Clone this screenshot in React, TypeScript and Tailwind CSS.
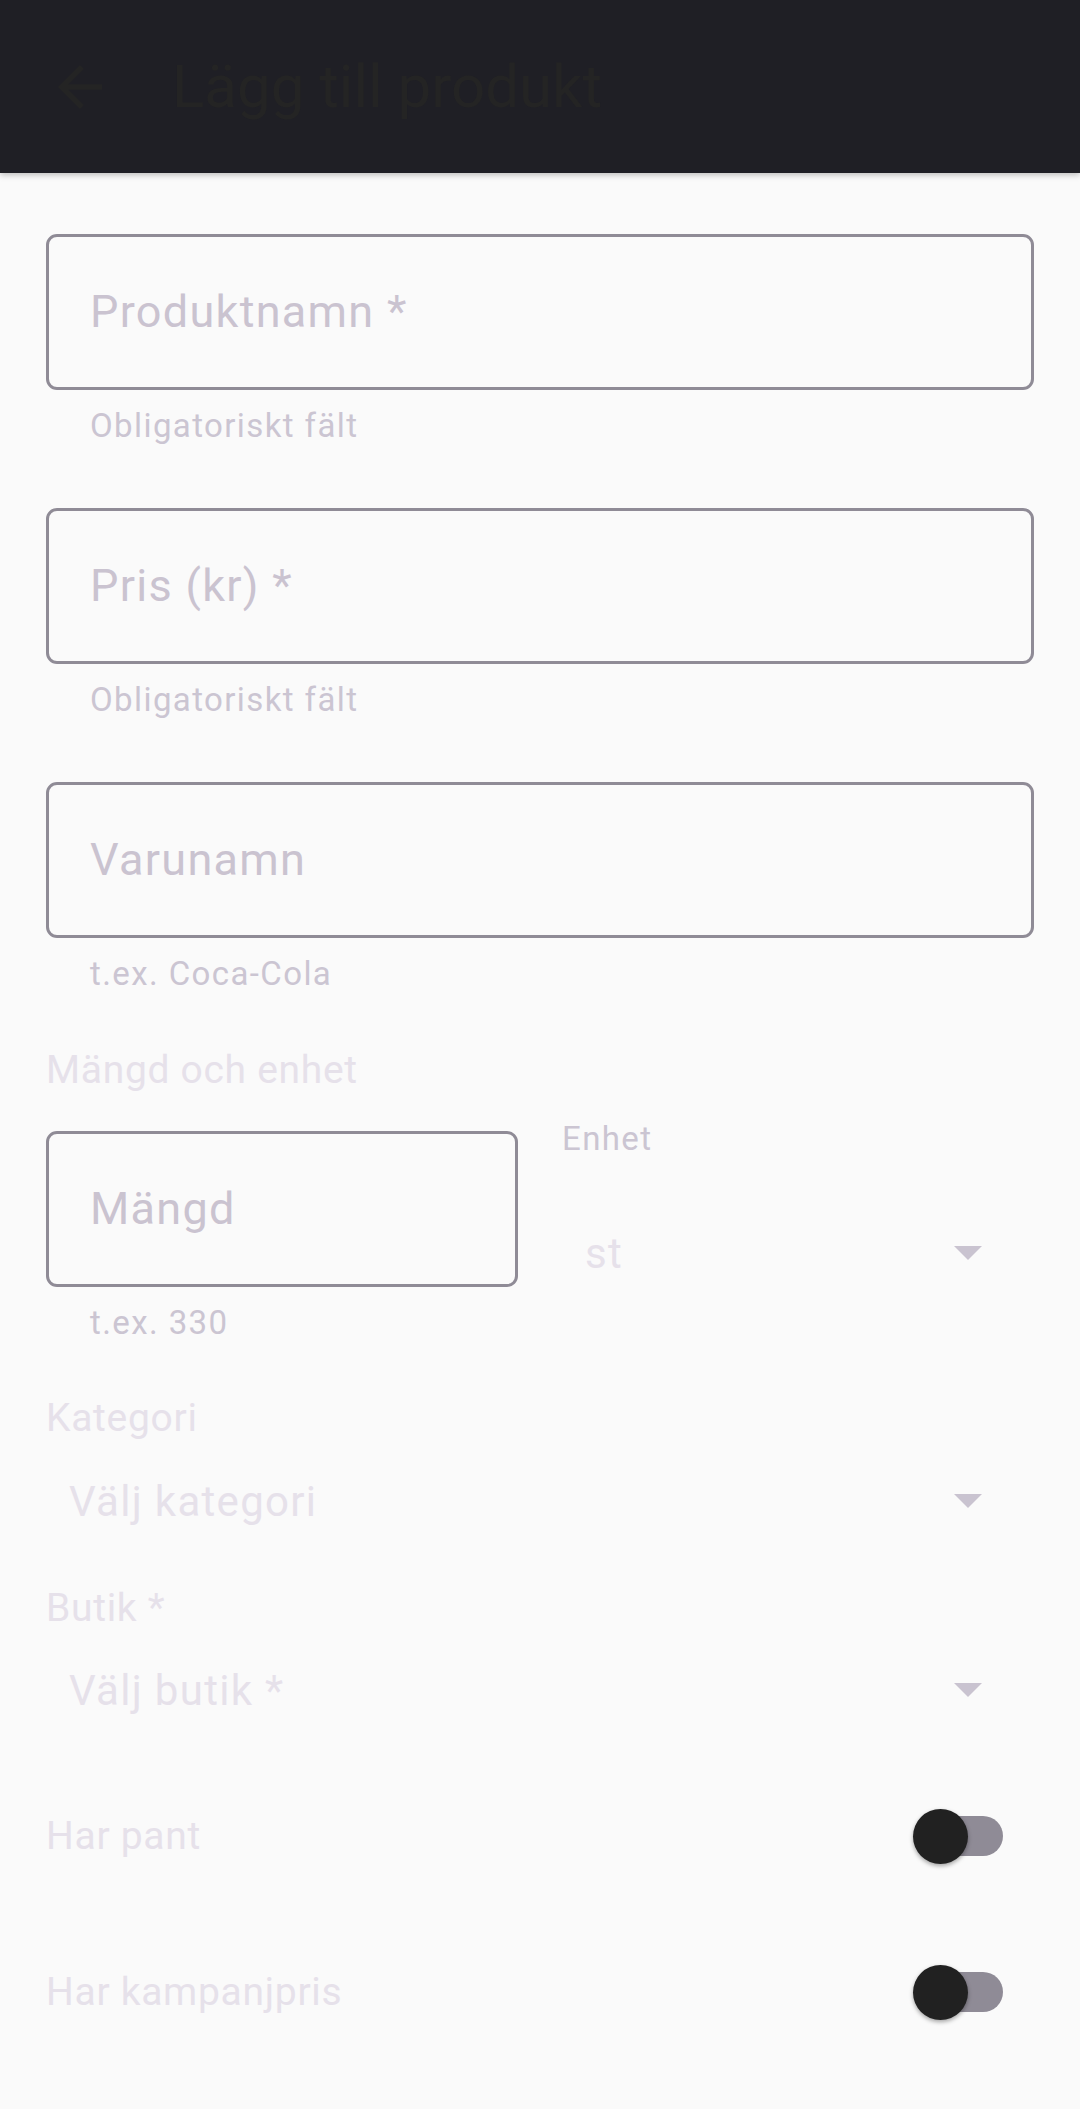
import React from "react";

const BackArrow = () => (
  <svg viewBox="0 0 24 24" className="w-[66px] h-[66px]" fill="#242424">
    <path d="M20 11H7.83l5.59-5.59L12 4l-8 8 8 8 1.41-1.41L7.83 13H20v-2z" />
  </svg>
);

const Caret = () => (
  <svg viewBox="0 0 28 14" className="w-[28px] h-[14px]" fill="#c9c3d0">
    <polygon points="0,0 28,0 14,14" />
  </svg>
);

function OutlinedField({ placeholder, helper }: { placeholder: string; helper: string }) {
  return (
    <div className="flex flex-col">
      <div className="h-[156px] rounded-[11px] border-[3px] border-[#8f8b96] flex items-center pl-[41px]">
        <span className="text-[45px] tracking-[1.3px] text-[#cac3d0]">{placeholder}</span>
      </div>
      <p className="mt-[14px] pl-[44px] text-[33px] leading-[44px] tracking-[1.4px] text-[#cbc5d2]">
        {helper}
      </p>
    </div>
  );
}

function Select({ value }: { value: string }) {
  return (
    <div className="h-[80px] flex items-center justify-between pl-[23px] pr-[52px]">
      <span className="text-[42px] tracking-[1.3px] text-[#e6e1ea]">{value}</span>
      <Caret />
    </div>
  );
}

function SwitchRow({ label }: { label: string }) {
  return (
    <div className="h-[132px] flex items-center justify-between pr-[31px]">
      <span className="text-[39px] tracking-[0.7px] text-[#e6e1ea]">{label}</span>
      <div className="relative w-[90px] h-[55px]">
        <div className="absolute left-[10px] right-0 top-[7px] h-[40px] rounded-full bg-[#8f8b96]" />
        <div className="absolute left-0 top-0 w-[55px] h-[55px] rounded-full bg-[#212121] shadow-[0_2px_4px_rgba(0,0,0,0.35)]" />
      </div>
    </div>
  );
}

export default function App() {
  return (
    <div className="min-h-[2109px] bg-[#fafafa] font-['Roboto',sans-serif]">
      <header className="h-[173px] bg-[#1f1f25] flex items-center pl-[47px] shadow-[0_2px_6px_rgba(0,0,0,0.25)]">
        <BackArrow />
        <h1 className="ml-[59px] text-[60px] leading-none text-[#242424]">Lägg till produkt</h1>
      </header>

      <main className="px-[46px] pt-[61px]">
        <div className="flex flex-col gap-[60px]">
          <OutlinedField placeholder="Produktnamn *" helper="Obligatoriskt fält" />
          <OutlinedField placeholder="Pris (kr) *" helper="Obligatoriskt fält" />
          <OutlinedField placeholder="Varunamn" helper="t.ex. Coca-Cola" />
        </div>

        <p className="mt-[48px] text-[39px] leading-[52px] tracking-[0.7px] text-[#e6e1ea]">Mängd och enhet</p>

        <div className="mt-[21px] flex items-start gap-[44px]">
          <div className="flex-1 mt-[14px]">
            <OutlinedField placeholder="Mängd" helper="t.ex. 330" />
          </div>
          <div className="flex-1">
            <p className="text-[33px] leading-[44px] tracking-[1.4px] text-[#cbc5d2]">Enhet</p>
            <div className="mt-[52px]">
              <Select value="st" />
            </div>
          </div>
        </div>

        <p className="mt-[47px] text-[39px] leading-[52px] tracking-[0.7px] text-[#e6e1ea]">Kategori</p>
        <div className="mt-[17px]">
          <Select value="Välj kategori" />
        </div>

        <p className="mt-[41px] text-[39px] leading-[52px] tracking-[0.7px] text-[#e6e1ea]">Butik *</p>
        <div className="mt-[16px]">
          <Select value="Välj butik *" />
        </div>

        <div className="mt-[40px]">
          <SwitchRow label="Har pant" />
        </div>
        <div className="mt-[24px]">
          <SwitchRow label="Har kampanjpris" />
        </div>
      </main>
    </div>
  );
}
